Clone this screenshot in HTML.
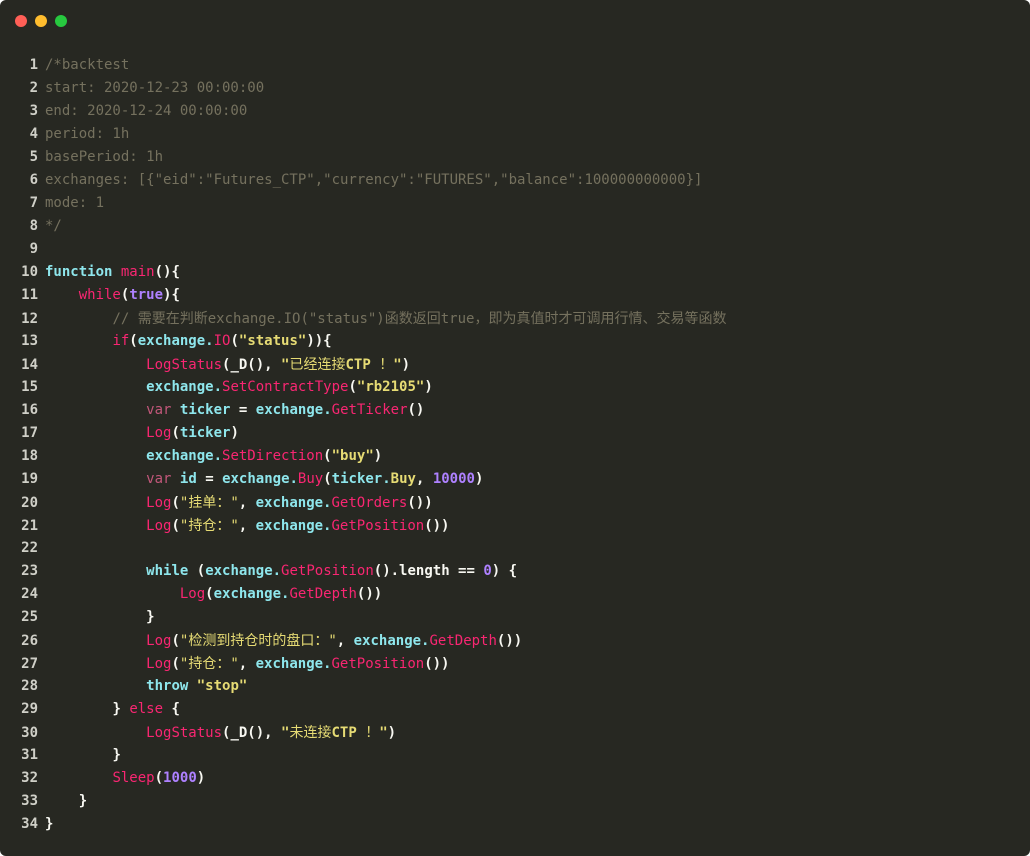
<!DOCTYPE html>
<html><head><meta charset="utf-8"><style>
html,body{margin:0;padding:0;background:#fff;}
.win{position:absolute;left:0;top:0;width:1030px;height:856px;background:#272822;border-radius:6px;overflow:hidden;}
.dot{position:absolute;top:15px;width:12px;height:12px;border-radius:50%;}
.code{position:absolute;left:0;top:53.5px;margin:0;font-family:"DejaVu Sans Mono","Liberation Mono","Noto Sans CJK SC",monospace;font-size:14px;color:#f8f8f2;}
.code div{height:23px;line-height:23px;white-space:pre;overflow:hidden;}
.ln{display:inline-block;width:38px;text-align:right;padding-right:7px;color:#d0d0c8;font-weight:bold;}
.cm{color:#75715e}
.k{color:#8ee6ec;font-weight:bold}
.p{color:#f92672}
.v{color:#c2577a}
.s{color:#e6db74;font-weight:bold}
.sn{color:#e6db74}
.n{color:#ae81ff;font-weight:bold}
.w{color:#f8f8f2;font-weight:bold}
.c{font-family:"Noto Sans CJK SC",sans-serif;font-weight:normal}
</style></head><body><div class="win">
<div class="dot" style="left:15px;background:#ff5f56"></div>
<div class="dot" style="left:35px;background:#ffbd2e"></div>
<div class="dot" style="left:55px;background:#27c93f"></div>
<div class="code">
<div><span class="ln">1</span><span class="cm">/*backtest</span></div>
<div><span class="ln">2</span><span class="cm">start: 2020-12-23 00:00:00</span></div>
<div><span class="ln">3</span><span class="cm">end: 2020-12-24 00:00:00</span></div>
<div><span class="ln">4</span><span class="cm">period: 1h</span></div>
<div><span class="ln">5</span><span class="cm">basePeriod: 1h</span></div>
<div><span class="ln">6</span><span class="cm">exchanges: [{"eid":"Futures_CTP","currency":"FUTURES","balance":100000000000}]</span></div>
<div><span class="ln">7</span><span class="cm">mode: 1</span></div>
<div><span class="ln">8</span><span class="cm">*/</span></div>
<div><span class="ln">9</span></div>
<div><span class="ln">10</span><span class="k">function</span> <span class="p">main</span><span class="w">(){</span></div>
<div><span class="ln">11</span>    <span class="p">while</span><span class="w">(</span><span class="n">true</span><span class="w">){</span></div>
<div><span class="ln">12</span>        <span class="cm">// <span class="c">需要在判断</span>exchange.IO("status")<span class="c">函数返回</span>true<span class="c">，即为真值时才可调用行情、交易等函数</span></span></div>
<div><span class="ln">13</span>        <span class="p">if</span><span class="w">(</span><span class="k">exchange.</span><span class="p">IO</span><span class="w">(</span><span class="s">"status"</span><span class="w">)){</span></div>
<div><span class="ln">14</span>            <span class="p">LogStatus</span><span class="w">(_D(), </span><span class="s">"<span class="c">已经连接</span>CTP <span class="c">！</span>"</span><span class="w">)</span></div>
<div><span class="ln">15</span>            <span class="k">exchange.</span><span class="p">SetContractType</span><span class="w">(</span><span class="s">"rb2105"</span><span class="w">)</span></div>
<div><span class="ln">16</span>            <span class="v">var</span> <span class="k">ticker</span> <span class="w">=</span> <span class="k">exchange.</span><span class="p">GetTicker</span><span class="w">()</span></div>
<div><span class="ln">17</span>            <span class="p">Log</span><span class="w">(</span><span class="k">ticker</span><span class="w">)</span></div>
<div><span class="ln">18</span>            <span class="k">exchange.</span><span class="p">SetDirection</span><span class="w">(</span><span class="s">"buy"</span><span class="w">)</span></div>
<div><span class="ln">19</span>            <span class="v">var</span> <span class="k">id</span> <span class="w">=</span> <span class="k">exchange.</span><span class="p">Buy</span><span class="w">(</span><span class="k">ticker.</span><span class="s">Buy</span><span class="w">, </span><span class="n">10000</span><span class="w">)</span></div>
<div><span class="ln">20</span>            <span class="p">Log</span><span class="w">(</span><span class="sn">"<span class="c">挂单：</span>"</span><span class="w">, </span><span class="k">exchange.</span><span class="p">GetOrders</span><span class="w">())</span></div>
<div><span class="ln">21</span>            <span class="p">Log</span><span class="w">(</span><span class="sn">"<span class="c">持仓：</span>"</span><span class="w">, </span><span class="k">exchange.</span><span class="p">GetPosition</span><span class="w">())</span></div>
<div><span class="ln">22</span></div>
<div><span class="ln">23</span>            <span class="k">while</span> <span class="w">(</span><span class="k">exchange.</span><span class="p">GetPosition</span><span class="w">().length == </span><span class="n">0</span><span class="w">) {</span></div>
<div><span class="ln">24</span>                <span class="p">Log</span><span class="w">(</span><span class="k">exchange.</span><span class="p">GetDepth</span><span class="w">())</span></div>
<div><span class="ln">25</span>            <span class="w">}</span></div>
<div><span class="ln">26</span>            <span class="p">Log</span><span class="w">(</span><span class="sn">"<span class="c">检测到持仓时的盘口：</span>"</span><span class="w">, </span><span class="k">exchange.</span><span class="p">GetDepth</span><span class="w">())</span></div>
<div><span class="ln">27</span>            <span class="p">Log</span><span class="w">(</span><span class="sn">"<span class="c">持仓：</span>"</span><span class="w">, </span><span class="k">exchange.</span><span class="p">GetPosition</span><span class="w">())</span></div>
<div><span class="ln">28</span>            <span class="k">throw</span> <span class="s">"stop"</span></div>
<div><span class="ln">29</span>        <span class="w">}</span> <span class="p">else</span> <span class="w">{</span></div>
<div><span class="ln">30</span>            <span class="p">LogStatus</span><span class="w">(_D(), </span><span class="s">"<span class="c">未连接</span>CTP <span class="c">！</span>"</span><span class="w">)</span></div>
<div><span class="ln">31</span>        <span class="w">}</span></div>
<div><span class="ln">32</span>        <span class="p">Sleep</span><span class="w">(</span><span class="n">1000</span><span class="w">)</span></div>
<div><span class="ln">33</span>    <span class="w">}</span></div>
<div><span class="ln">34</span><span class="w">}</span></div>
</div>
</div></body></html>
